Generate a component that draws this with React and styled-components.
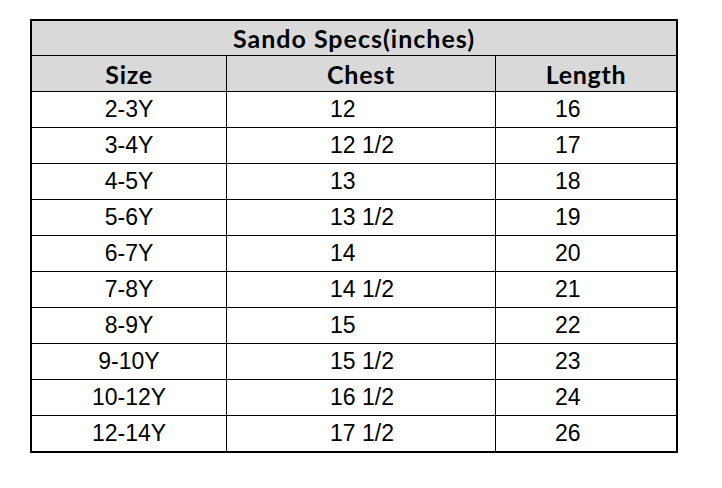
import React from "react";
import styled, { createGlobalStyle } from "styled-components";

const Global = createGlobalStyle`
  html, body { margin: 0; padding: 0; background: #fff; }
  body { width: 722px; height: 488px; overflow: hidden; }
`;

const Page = styled.div`
  padding: 19px 0 0 30px;
`;

const Table = styled.div`
  width: 648px;
  box-sizing: border-box;
  border: 2px solid #000;
  display: grid;
  grid-template-columns: 195px 269px 180px;
`;

const Title = styled.div`
  grid-column: 1 / -1;
  height: 34px;
  border-bottom: 1px solid #000;
  background: #d9d9d9;
  display: flex;
  align-items: center;
  justify-content: center;
  font-family: Lato, "Open Sans", sans-serif;
  font-weight: 700;
  font-size: 25px;
  letter-spacing: 1px;
  color: #000;
`;

const Cell = styled.div`
  height: 35px;
  box-sizing: content-box;
  border-bottom: ${(p) => (p.$last ? "none" : "1px solid #000")};
  border-right: ${(p) => (p.$end ? "none" : "1px solid #000")};
  display: flex;
  align-items: center;
  justify-content: ${(p) => (p.$pad ? "flex-start" : "center")};
  padding-left: ${(p) => p.$pad || 0}px;
  background: ${(p) => (p.$head ? "#d9d9d9" : "#fff")};
  font-family: ${(p) =>
    p.$head ? 'Lato, "Open Sans", sans-serif' : '"Liberation Sans", Arial, sans-serif'};
  font-weight: ${(p) => (p.$head ? 700 : 400)};
  font-size: ${(p) => (p.$head ? "25px" : "23px")};
  letter-spacing: ${(p) => (p.$head ? "0.7px" : "0")};
  color: #000;
  overflow: hidden;
  white-space: nowrap;
`;

const rows = [
  ["2-3Y", "12", "16"],
  ["3-4Y", "12 1/2", "17"],
  ["4-5Y", "13", "18"],
  ["5-6Y", "13 1/2", "19"],
  ["6-7Y", "14", "20"],
  ["7-8Y", "14 1/2", "21"],
  ["8-9Y", "15", "22"],
  ["9-10Y", "15 1/2", "23"],
  ["10-12Y", "16 1/2", "24"],
  ["12-14Y", "17 1/2", "26"],
];

export default function App() {
  return (
    <>
      <Global />
      <Page>
        <Table>
          <Title>Sando Specs(inches)</Title>
          <Cell $head>Size</Cell>
          <Cell $head>Chest</Cell>
          <Cell $head $end>Length</Cell>
          {rows.map((r, i) => {
            const last = i === rows.length - 1;
            return (
              <React.Fragment key={r[0]}>
                <Cell $last={last}>{r[0]}</Cell>
                <Cell $last={last} $pad={103}>{r[1]}</Cell>
                <Cell $last={last} $end $pad={59}>{r[2]}</Cell>
              </React.Fragment>
            );
          })}
        </Table>
      </Page>
    </>
  );
}
